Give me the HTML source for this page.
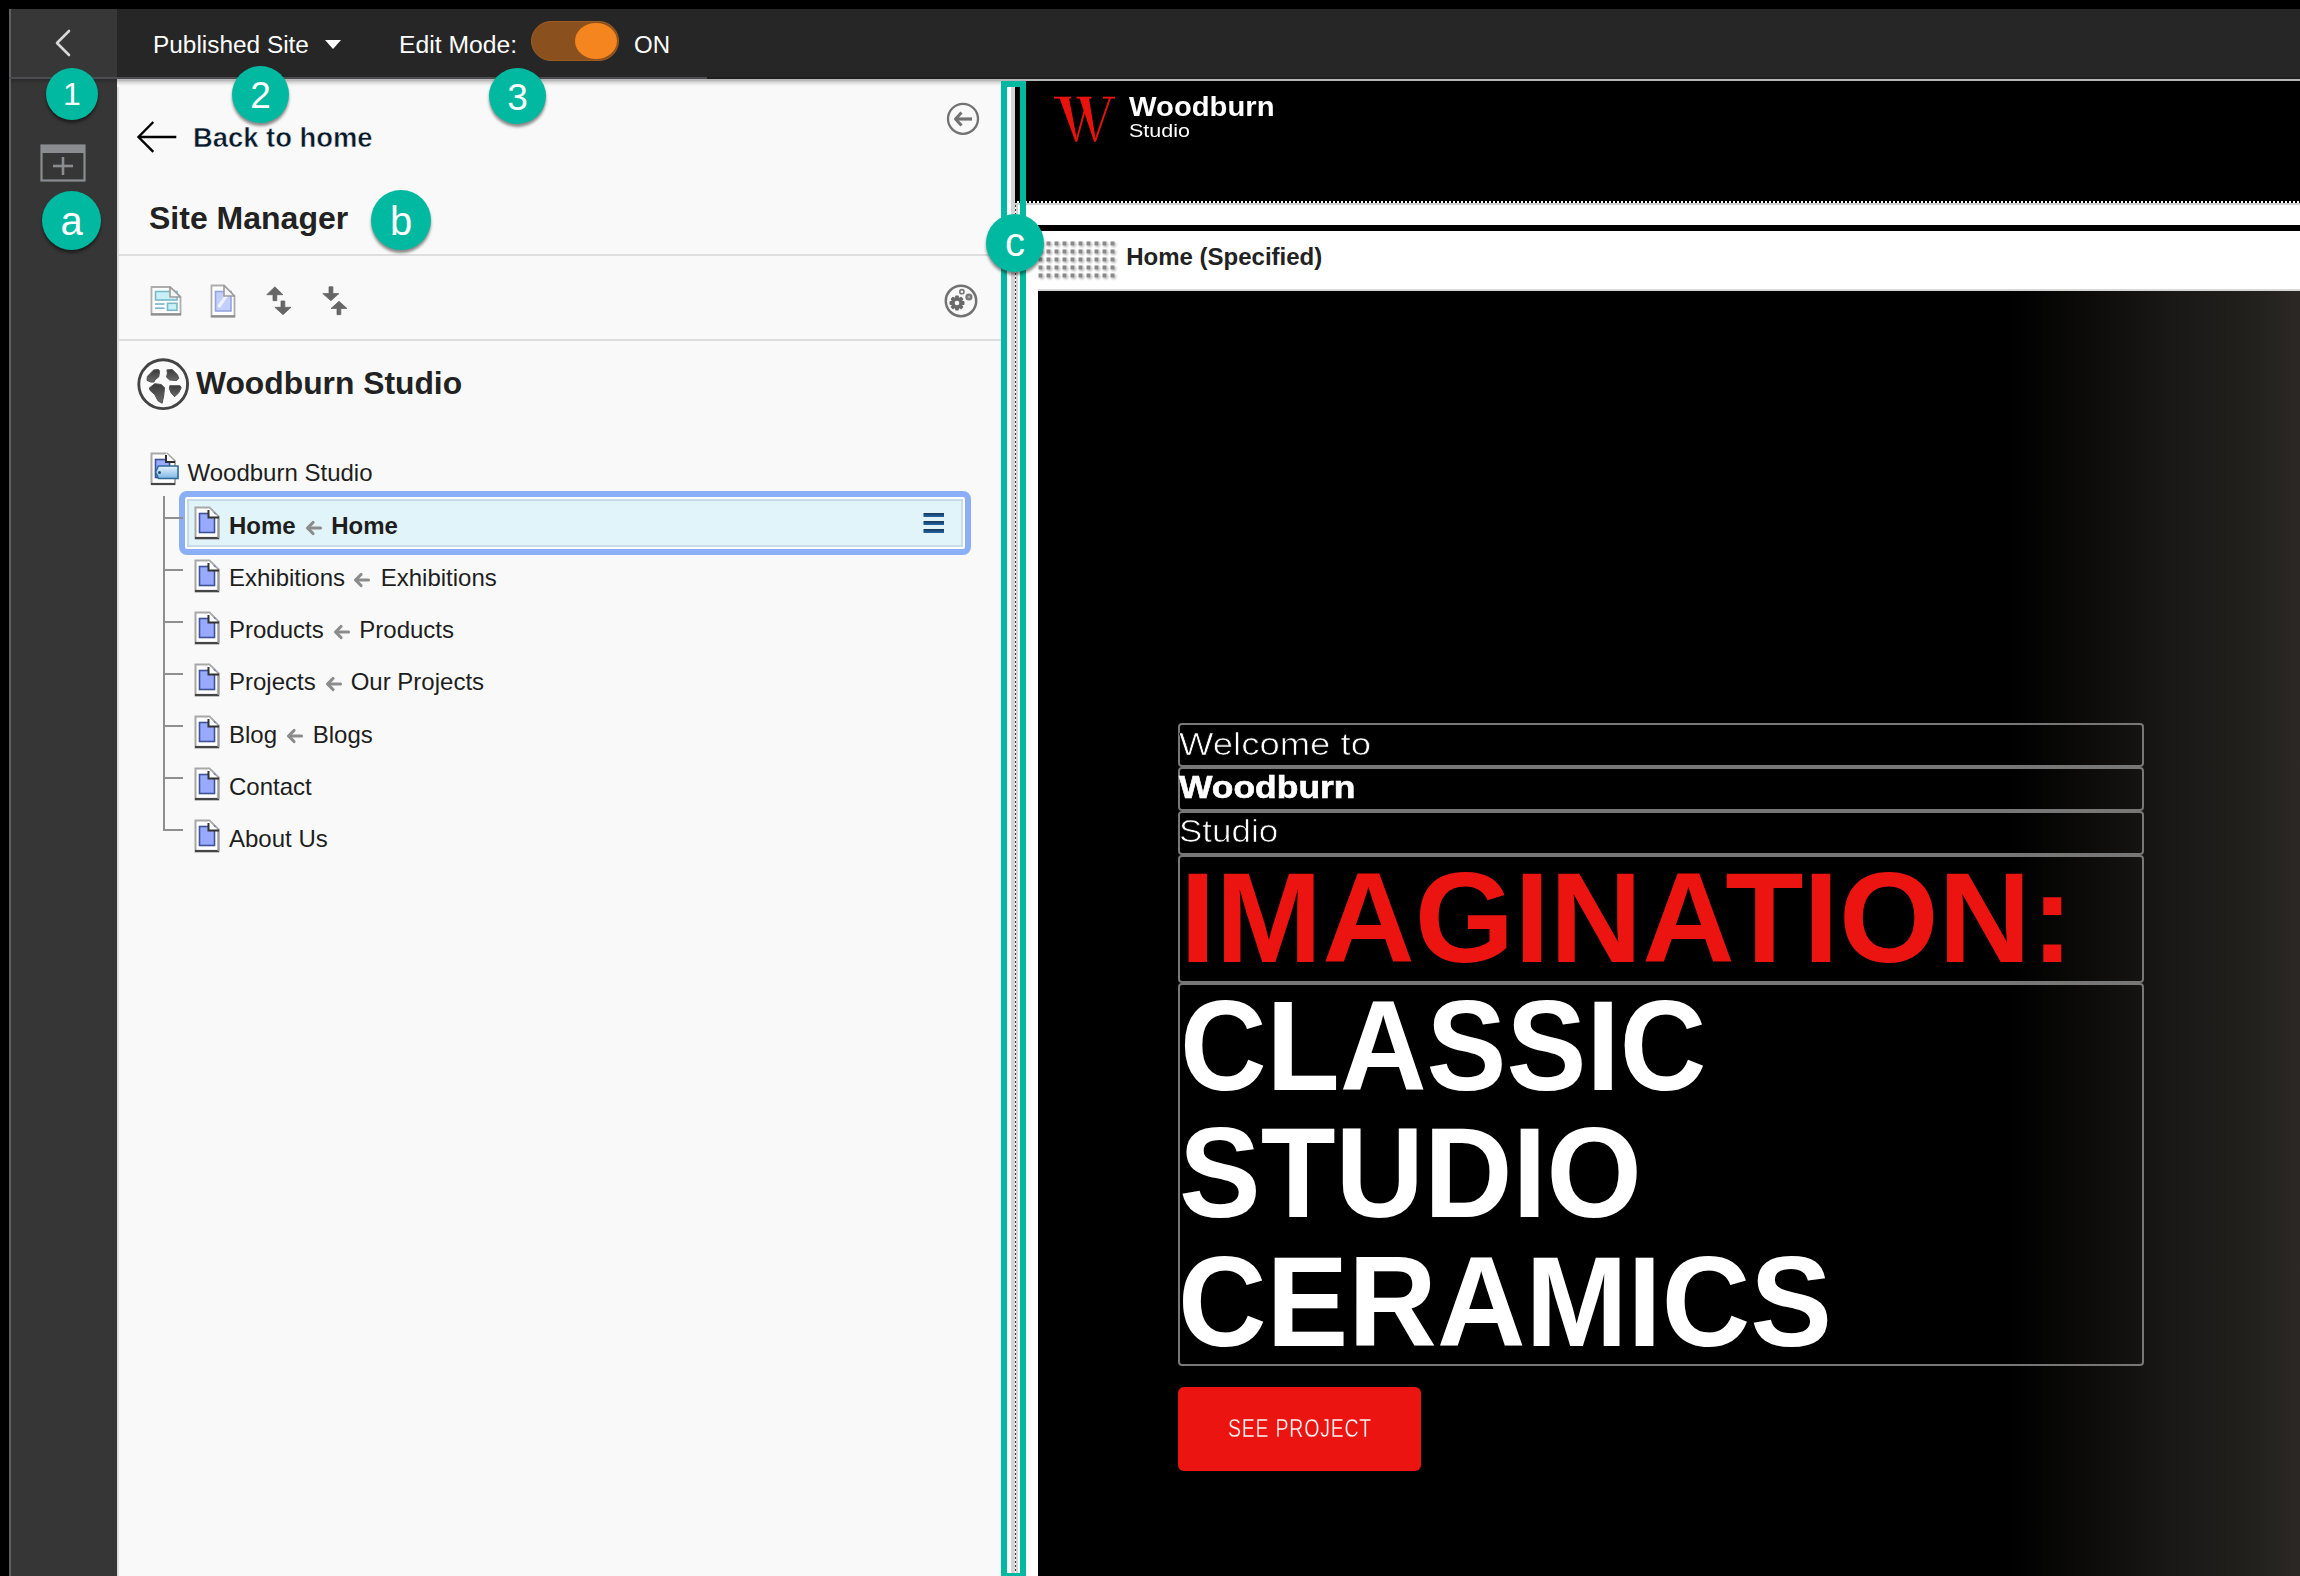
<!DOCTYPE html>
<html><head><meta charset="utf-8">
<style>
*{margin:0;padding:0;box-sizing:border-box}
html,body{width:2300px;height:1576px;overflow:hidden;background:#000;font-family:"Liberation Sans",sans-serif}
.a{position:absolute}
.t{position:absolute;white-space:nowrap;line-height:1}
.badge{position:absolute;z-index:5;border-radius:50%;background:#00b9a0;box-shadow:0 3px 3px rgba(0,0,0,.45);color:#fff;text-align:center;font-family:"Liberation Sans",sans-serif}
.badge span{position:absolute;left:0;right:0;line-height:1}
</style></head><body>

<!-- left sidebar -->
<div class="a" style="left:9px;top:9px;width:108px;height:1567px;background:#363636"></div>
<div class="a" style="left:9px;top:9px;width:2px;height:1567px;background:#5e5e5e"></div>
<div class="a" style="left:11px;top:9px;width:106px;height:68px;background:#373737"></div>
<div class="a" style="left:11px;top:79px;width:106px;height:5px;background:linear-gradient(#2a2a2a,#363636)"></div>
<div class="a" style="left:9px;top:77px;width:108px;height:2px;background:#4b4d53"></div>
<svg class="a" style="left:50px;top:28px" width="26" height="30"><polyline points="19,3 7,15 19,27" fill="none" stroke="#d8d8d8" stroke-width="2.6" stroke-linecap="round" stroke-linejoin="round"/></svg>
<!-- add section icon -->
<svg class="a" style="left:40px;top:144px" width="46" height="38">
<rect x="1.5" y="1.5" width="43" height="35" fill="none" stroke="#8b8c90" stroke-width="2.2"/>
<rect x="1" y="1" width="44" height="8" fill="#8b8c90"/>
<line x1="13" y1="22" x2="33" y2="22" stroke="#8b8c90" stroke-width="2.6"/>
<line x1="23" y1="13" x2="23" y2="31" stroke="#8b8c90" stroke-width="2.6"/>
</svg>

<!-- top bar -->
<div class="a" style="left:117px;top:9px;width:2183px;height:70px;background:#262626"></div>
<div class="a" style="left:117px;top:77px;width:590px;height:2px;background:#4b4d53"></div>
<div class="a" style="left:707px;top:77px;width:1593px;height:2px;background:#1f1f1f"></div>
<div class="t" style="left:153px;top:33.2px;font-size:24.4px;color:#fff">Published Site</div>
<svg class="a" style="left:324px;top:39px" width="18" height="11"><polygon points="1,1 17,1 9,10" fill="#fff"/></svg>
<div class="t" style="left:399px;top:33.2px;font-size:24.7px;color:#fff">Edit Mode:</div>
<div class="a" style="left:531px;top:21px;width:88px;height:40px;border-radius:20px;background:#8a511f;border:1.5px solid #9d5b20"></div>
<div class="a" style="left:575px;top:23px;width:42px;height:36px;border-radius:50%;background:#f5851e"></div>
<div class="t" style="left:634px;top:33.2px;font-size:24px;color:#fff">ON</div>

<!-- panel -->
<div class="a" style="left:117px;top:79px;width:884px;height:1497px;background:#f9f9f9"></div>
<div class="a" style="left:117px;top:79px;width:2px;height:1497px;background:#dcdcdc"></div>
<div class="a" style="left:117px;top:79px;width:884px;height:8px;background:linear-gradient(#b8b8b8 0,#b8b8b8 1.5px,#d4d4d4 3px,#f3f3f3 6px,#f9f9f9 8px)"></div>
<div class="a" style="left:1001px;top:79px;width:1299px;height:2px;background:#b6b6b6"></div>

<!-- back to home -->
<svg class="a" style="left:136px;top:120px" width="44" height="36"><polyline points="17.3,2 2.5,17 17.3,31.8" fill="none" stroke="#000" stroke-width="2.4"/><line x1="3" y1="17" x2="40.3" y2="17" stroke="#000" stroke-width="2.4"/></svg>
<div class="t" style="left:193px;top:124px;font-size:27.4px;font-weight:bold;color:#071a2b;-webkit-text-stroke:0.5px #f9f9f9">Back to home</div>
<!-- collapse icon -->
<svg class="a" style="left:945px;top:101px" width="36" height="36"><circle cx="18" cy="17.8" r="15" fill="none" stroke="#727272" stroke-width="2.3"/><polyline points="16.5,11.5 10.5,18 16.5,24.5" fill="none" stroke="#727272" stroke-width="3" stroke-linejoin="round"/><line x1="11" y1="18" x2="27" y2="18" stroke="#727272" stroke-width="3.2"/></svg>

<div class="t" style="left:149px;top:202px;font-size:32px;font-weight:bold;color:#222">Site Manager</div>
<div class="a" style="left:119px;top:254px;width:882px;height:2px;background:#dedede"></div>

<!-- toolbar -->
<svg class="a" style="left:150px;top:285px" width="32" height="31">
<path d="M1.5,2 H20 L30.5,12 V29.5 H1.5 Z" fill="#fff" stroke="#adadad" stroke-width="1.8"/>
<line x1="1" y1="29.3" x2="31" y2="29.3" stroke="#8e8e8e" stroke-width="2.2"/>
<rect x="5.5" y="6.5" width="21.5" height="8.5" fill="#c9f0f7" stroke="#7ab8c8" stroke-width="1.6"/>
<line x1="5" y1="19" x2="14.5" y2="19" stroke="#7ab8c8" stroke-width="1.7"/>
<line x1="5" y1="23.2" x2="14.5" y2="23.2" stroke="#7ab8c8" stroke-width="1.7"/>
<rect x="17.5" y="18.3" width="9.5" height="7" fill="#c9f0f7" stroke="#7ab8c8" stroke-width="1.6"/>
<path d="M20,2 V12 H30.5 Z" fill="#f6f6f6" stroke="#9d9d9d" stroke-width="1.6" stroke-linejoin="round"/>
</svg>
<svg class="a" style="left:210px;top:284px" width="26" height="34">
<path d="M1.5,1.5 H14 L24.5,12 V32.5 H1.5 Z" fill="#fff" stroke="#adadad" stroke-width="1.8"/>
<line x1="1" y1="32.3" x2="25" y2="32.3" stroke="#8e8e8e" stroke-width="2.2"/>
<rect x="5.5" y="7.5" width="15.5" height="19.5" fill="#c3cffb" stroke="#93a5dc" stroke-width="1.6"/>
<line x1="8.5" y1="23" x2="17" y2="11" stroke="#eef1ff" stroke-width="3.2"/>
<path d="M14,1.5 V12 H24.5 Z" fill="#f6f6f6" stroke="#9d9d9d" stroke-width="1.6" stroke-linejoin="round"/>
</svg>
<svg class="a" style="left:265px;top:285px" width="30" height="32" fill="#666" stroke="#666" stroke-width="0.8" stroke-linejoin="round">
<polygon points="9.9,1.8 17.9,9.7 11.8,9.7 11.8,15.7 8,15.7 8,9.7 1.8,9.7"/>
<polygon points="16,16 19.8,16 19.8,22.3 26,22.3 18,29.7 9.9,22.3 16,22.3"/>
</svg>
<svg class="a" style="left:321px;top:285px" width="30" height="32" fill="#666" stroke="#666" stroke-width="0.8" stroke-linejoin="round">
<polygon points="8,1.8 11.9,1.8 11.9,8.6 17.9,8.6 9.9,15.7 1.8,8.6 8,8.6"/>
<polygon points="18,16.3 26,23.5 19.8,23.5 19.8,29.7 16,29.7 16,23.5 10,23.5"/>
</svg>
<!-- settings icon -->
<svg class="a" style="left:943px;top:283px" width="36" height="36">
<circle cx="18" cy="18" r="15.2" fill="none" stroke="#727272" stroke-width="2.5"/>
<g fill="#6a6a6a"><rect x="12.1" y="12.5" width="3.8" height="3.5" rx="0.9" transform="rotate(0 14 20)"/><rect x="12.1" y="12.5" width="3.8" height="3.5" rx="0.9" transform="rotate(45 14 20)"/><rect x="12.1" y="12.5" width="3.8" height="3.5" rx="0.9" transform="rotate(90 14 20)"/><rect x="12.1" y="12.5" width="3.8" height="3.5" rx="0.9" transform="rotate(135 14 20)"/><rect x="12.1" y="12.5" width="3.8" height="3.5" rx="0.9" transform="rotate(180 14 20)"/><rect x="12.1" y="12.5" width="3.8" height="3.5" rx="0.9" transform="rotate(225 14 20)"/><rect x="12.1" y="12.5" width="3.8" height="3.5" rx="0.9" transform="rotate(270 14 20)"/><rect x="12.1" y="12.5" width="3.8" height="3.5" rx="0.9" transform="rotate(315 14 20)"/><circle cx="14" cy="20" r="5.9"/></g>
<circle cx="14" cy="20" r="2.3" fill="#f9f9f9"/>
<circle cx="18.9" cy="8.7" r="2.1" fill="none" stroke="#777" stroke-width="1.6"/>
<circle cx="25.9" cy="14" r="3.6" fill="#7a7a7a"/>
<circle cx="25.9" cy="14" r="1.3" fill="#aaa"/>
</svg>
<div class="a" style="left:119px;top:339px;width:882px;height:2px;background:#dedede"></div>

<!-- globe -->
<svg class="a" style="left:135px;top:356px" width="58" height="58">
<defs><linearGradient id="gg" x1="0" y1="0" x2="0" y2="1"><stop offset="0" stop-color="#3a3a3a"/><stop offset="1" stop-color="#6a6a6a"/></linearGradient></defs>
<circle cx="28.2" cy="28.2" r="24.4" fill="#fafafa" stroke="#444" stroke-width="2.9"/>
<g fill="url(#gg)" stroke="#505050" stroke-width="1" stroke-linejoin="round">
<polygon points="12.4,20.4 18.7,13.9 23.4,13.5 24.6,15.1 23.8,20.8 19.8,24 19,26 15.7,26 12,24.4"/><polygon points="31.9,13.9 37.2,13.5 42.5,18.8 43.7,22.4 41.7,24.5 34.8,24 31.6,21.2 32.4,17.1"/><polygon points="14.5,31.8 19.8,27.7 26.3,28.5 29.5,31.8 28.7,39.9 27.1,47.2 23,44.8 19.8,38.7 14.9,34.2"/><polygon points="34.8,29.7 45,29.7 46.2,31.8 43.7,36.7 39.7,40.7 36,36.7 34.4,32.6"/>
</g>
</svg>
<div class="t" style="left:196px;top:368px;font-size:31.8px;font-weight:bold;color:#222">Woodburn Studio</div>

<!-- tree -->
<!-- root icon -->
<svg class="a" style="left:149px;top:451px" width="32" height="36">
<path d="M2.5,2.5 H18 L26,10 V33 H2.5 Z" fill="#fff" stroke="#a8a8a8" stroke-width="2"/>
<line x1="2" y1="33" x2="26" y2="33" stroke="#454545" stroke-width="2.2"/>
<rect x="6.5" y="8.5" width="14" height="18" fill="#97aaff" stroke="#3d5394" stroke-width="1.6"/>
<path d="M17,2 V11 H26 Z" fill="#fff"/><path d="M17,4 V11 H26" fill="none" stroke="#2e2e2e" stroke-width="2"/>
<defs><linearGradient id="tg" x1="0" y1="0" x2="0" y2="1"><stop offset="0" stop-color="#e6f3fc"/><stop offset="1" stop-color="#7fb6e8"/></linearGradient></defs>
<path d="M9.5,15 H29 V27.5 H9.5 L6.5,21 Z" fill="url(#tg)" stroke="#2f6a99" stroke-width="1.6"/>
<circle cx="10.5" cy="21.5" r="1.5" fill="#2d5070"/>
</svg>
<div class="t" style="left:187.5px;top:460.6px;font-size:24px;color:#1e1e1e">Woodburn Studio</div>
<div class="a" style="left:163px;top:496px;width:2px;height:335px;background:#8f8f8f"></div>
<!-- selected row -->
<div class="a" style="left:179px;top:491px;width:792px;height:64px;border:6px solid #8aaff7;border-radius:8px;background:#fff"></div>
<div class="a" style="left:187px;top:499px;width:776px;height:48px;border:2px solid #c6dde8;background:#e1f4fa"></div>
<svg class="a" style="left:922px;top:511px" width="24" height="24"><defs><linearGradient id="hb" x1="0" y1="0" x2="0" y2="1"><stop offset="0" stop-color="#16385c"/><stop offset="1" stop-color="#2566a3"/></linearGradient></defs><g fill="url(#hb)"><rect x="1.5" y="2" width="20.5" height="4"/><rect x="1.5" y="10" width="20.5" height="4"/><rect x="1.5" y="18" width="20.5" height="4"/></g></svg>
<div class="a" style="left:163px;top:517px;width:20px;height:2px;background:#8f8f8f"></div>
<svg class="a" style="left:194px;top:506px" width="26" height="34"><path d="M1.5,1.5 H15.5 L24.5,10.5 V32.5 H1.5 Z" fill="#fff" stroke="#a8a8a8" stroke-width="2"/><line x1="1" y1="32" x2="25" y2="32" stroke="#454545" stroke-width="2.2"/><line x1="24.5" y1="10" x2="24.5" y2="32" stroke="#9a9a9a" stroke-width="2"/><rect x="5.5" y="7.5" width="15" height="19" fill="#97aaff" stroke="#3d5394" stroke-width="1.6"/><path d="M14.5,2 V11.5 H24.5 Z" fill="#fff"/><path d="M14.5,4 V11.5 H25" fill="none" stroke="#333" stroke-width="2"/></svg>
<div class="t" style="left:229px;top:514.2px;font-size:24px;font-weight:bold;color:#1e1e1e">Home</div>
<svg class="a" style="left:304.5px;top:520.0px" width="20" height="16"><g fill="none" stroke="#8c8c8c" stroke-width="3.2" stroke-linecap="round" stroke-linejoin="round"><polyline points="8,2.5 2.6,8 8,13.5"/><line x1="3" y1="8" x2="15.5" y2="8"/></g></svg>
<div class="t" style="left:331.2px;top:514.2px;font-size:24px;font-weight:bold;color:#1e1e1e">Home</div>
<div class="a" style="left:163px;top:569px;width:20px;height:2px;background:#8f8f8f"></div>
<svg class="a" style="left:194px;top:559px" width="26" height="34"><path d="M1.5,1.5 H15.5 L24.5,10.5 V32.5 H1.5 Z" fill="#fff" stroke="#a8a8a8" stroke-width="2"/><line x1="1" y1="32" x2="25" y2="32" stroke="#454545" stroke-width="2.2"/><line x1="24.5" y1="10" x2="24.5" y2="32" stroke="#9a9a9a" stroke-width="2"/><rect x="5.5" y="7.5" width="15" height="19" fill="#97aaff" stroke="#3d5394" stroke-width="1.6"/><path d="M14.5,2 V11.5 H24.5 Z" fill="#fff"/><path d="M14.5,4 V11.5 H25" fill="none" stroke="#333" stroke-width="2"/></svg>
<div class="t" style="left:229px;top:566.3px;font-size:24px;font-weight:normal;color:#1e1e1e">Exhibitions</div>
<svg class="a" style="left:353.4px;top:572.1px" width="20" height="16"><g fill="none" stroke="#8c8c8c" stroke-width="3.2" stroke-linecap="round" stroke-linejoin="round"><polyline points="8,2.5 2.6,8 8,13.5"/><line x1="3" y1="8" x2="15.5" y2="8"/></g></svg>
<div class="t" style="left:380.7px;top:566.3px;font-size:24px;font-weight:normal;color:#1e1e1e">Exhibitions</div>
<div class="a" style="left:163px;top:621px;width:20px;height:2px;background:#8f8f8f"></div>
<svg class="a" style="left:194px;top:611px" width="26" height="34"><path d="M1.5,1.5 H15.5 L24.5,10.5 V32.5 H1.5 Z" fill="#fff" stroke="#a8a8a8" stroke-width="2"/><line x1="1" y1="32" x2="25" y2="32" stroke="#454545" stroke-width="2.2"/><line x1="24.5" y1="10" x2="24.5" y2="32" stroke="#9a9a9a" stroke-width="2"/><rect x="5.5" y="7.5" width="15" height="19" fill="#97aaff" stroke="#3d5394" stroke-width="1.6"/><path d="M14.5,2 V11.5 H24.5 Z" fill="#fff"/><path d="M14.5,4 V11.5 H25" fill="none" stroke="#333" stroke-width="2"/></svg>
<div class="t" style="left:229px;top:618.3px;font-size:24px;font-weight:normal;color:#1e1e1e">Products</div>
<svg class="a" style="left:332.5px;top:624.2px" width="20" height="16"><g fill="none" stroke="#8c8c8c" stroke-width="3.2" stroke-linecap="round" stroke-linejoin="round"><polyline points="8,2.5 2.6,8 8,13.5"/><line x1="3" y1="8" x2="15.5" y2="8"/></g></svg>
<div class="t" style="left:359.3px;top:618.3px;font-size:24px;font-weight:normal;color:#1e1e1e">Products</div>
<div class="a" style="left:163px;top:673px;width:20px;height:2px;background:#8f8f8f"></div>
<svg class="a" style="left:194px;top:663px" width="26" height="34"><path d="M1.5,1.5 H15.5 L24.5,10.5 V32.5 H1.5 Z" fill="#fff" stroke="#a8a8a8" stroke-width="2"/><line x1="1" y1="32" x2="25" y2="32" stroke="#454545" stroke-width="2.2"/><line x1="24.5" y1="10" x2="24.5" y2="32" stroke="#9a9a9a" stroke-width="2"/><rect x="5.5" y="7.5" width="15" height="19" fill="#97aaff" stroke="#3d5394" stroke-width="1.6"/><path d="M14.5,2 V11.5 H24.5 Z" fill="#fff"/><path d="M14.5,4 V11.5 H25" fill="none" stroke="#333" stroke-width="2"/></svg>
<div class="t" style="left:229px;top:670.4px;font-size:24px;font-weight:normal;color:#1e1e1e">Projects</div>
<svg class="a" style="left:324.5px;top:676.2px" width="20" height="16"><g fill="none" stroke="#8c8c8c" stroke-width="3.2" stroke-linecap="round" stroke-linejoin="round"><polyline points="8,2.5 2.6,8 8,13.5"/><line x1="3" y1="8" x2="15.5" y2="8"/></g></svg>
<div class="t" style="left:350.7px;top:670.4px;font-size:24px;font-weight:normal;color:#1e1e1e">Our Projects</div>
<div class="a" style="left:163px;top:725px;width:20px;height:2px;background:#8f8f8f"></div>
<svg class="a" style="left:194px;top:715px" width="26" height="34"><path d="M1.5,1.5 H15.5 L24.5,10.5 V32.5 H1.5 Z" fill="#fff" stroke="#a8a8a8" stroke-width="2"/><line x1="1" y1="32" x2="25" y2="32" stroke="#454545" stroke-width="2.2"/><line x1="24.5" y1="10" x2="24.5" y2="32" stroke="#9a9a9a" stroke-width="2"/><rect x="5.5" y="7.5" width="15" height="19" fill="#97aaff" stroke="#3d5394" stroke-width="1.6"/><path d="M14.5,2 V11.5 H24.5 Z" fill="#fff"/><path d="M14.5,4 V11.5 H25" fill="none" stroke="#333" stroke-width="2"/></svg>
<div class="t" style="left:229px;top:722.5px;font-size:24px;font-weight:normal;color:#1e1e1e">Blog</div>
<svg class="a" style="left:285.5px;top:728.3px" width="20" height="16"><g fill="none" stroke="#8c8c8c" stroke-width="3.2" stroke-linecap="round" stroke-linejoin="round"><polyline points="8,2.5 2.6,8 8,13.5"/><line x1="3" y1="8" x2="15.5" y2="8"/></g></svg>
<div class="t" style="left:312.7px;top:722.5px;font-size:24px;font-weight:normal;color:#1e1e1e">Blogs</div>
<div class="a" style="left:163px;top:777px;width:20px;height:2px;background:#8f8f8f"></div>
<svg class="a" style="left:194px;top:767px" width="26" height="34"><path d="M1.5,1.5 H15.5 L24.5,10.5 V32.5 H1.5 Z" fill="#fff" stroke="#a8a8a8" stroke-width="2"/><line x1="1" y1="32" x2="25" y2="32" stroke="#454545" stroke-width="2.2"/><line x1="24.5" y1="10" x2="24.5" y2="32" stroke="#9a9a9a" stroke-width="2"/><rect x="5.5" y="7.5" width="15" height="19" fill="#97aaff" stroke="#3d5394" stroke-width="1.6"/><path d="M14.5,2 V11.5 H24.5 Z" fill="#fff"/><path d="M14.5,4 V11.5 H25" fill="none" stroke="#333" stroke-width="2"/></svg>
<div class="t" style="left:229px;top:774.6px;font-size:24px;font-weight:normal;color:#1e1e1e">Contact</div>
<div class="a" style="left:163px;top:829px;width:20px;height:2px;background:#8f8f8f"></div>
<svg class="a" style="left:194px;top:819px" width="26" height="34"><path d="M1.5,1.5 H15.5 L24.5,10.5 V32.5 H1.5 Z" fill="#fff" stroke="#a8a8a8" stroke-width="2"/><line x1="1" y1="32" x2="25" y2="32" stroke="#454545" stroke-width="2.2"/><line x1="24.5" y1="10" x2="24.5" y2="32" stroke="#9a9a9a" stroke-width="2"/><rect x="5.5" y="7.5" width="15" height="19" fill="#97aaff" stroke="#3d5394" stroke-width="1.6"/><path d="M14.5,2 V11.5 H24.5 Z" fill="#fff"/><path d="M14.5,4 V11.5 H25" fill="none" stroke="#333" stroke-width="2"/></svg>
<div class="t" style="left:229px;top:826.7px;font-size:24px;font-weight:normal;color:#1e1e1e">About Us</div>

<!-- splitter -->
<div class="a" style="left:1001px;top:81px;width:6px;height:1495px;background:#00b9a0;z-index:2"></div>
<div class="a" style="left:1007px;top:87px;width:4px;height:1486px;background:#fdfdfd"></div>
<div class="a" style="left:1011px;top:87px;width:9px;height:1486px;background:#d4d4d4"></div>
<div class="a" style="left:1018px;top:205px;width:2px;height:1368px;background:#fdfdfd"></div>
<div class="a" style="left:1015px;top:201px;width:1px;height:1372px;background:repeating-linear-gradient(#3a3a3a 0 2px,#fff 2px 4px)"></div>
<div class="a" style="left:1015px;top:87px;width:5px;height:114px;background:#000"></div>
<div class="a" style="left:1020px;top:81px;width:6px;height:1495px;background:#00b9a0;z-index:2"></div>
<div class="a" style="left:1001px;top:81px;width:25px;height:6px;background:#00b9a0;z-index:2"></div>
<div class="a" style="left:1001px;top:1573px;width:25px;height:3px;background:#00b9a0;z-index:2"></div>

<!-- website -->
<div class="a" style="left:1026px;top:81px;width:1274px;height:120px;background:#000"></div>
<div class="a" style="left:1015px;top:201px;width:1285px;height:2px;background:repeating-linear-gradient(90deg,#000 0 2px,#fff 2px 4px)"></div>
<div class="a" style="left:1015px;top:203px;width:1285px;height:2px;background:#d0d0d0"></div>
<div class="a" style="left:1026px;top:205px;width:1274px;height:1371px;background:#fff"></div>
<div class="a" style="left:1038px;top:225px;width:1262px;height:6px;background:#000"></div>
<div class="a" style="left:1038px;top:289px;width:1262px;height:2px;background:#d8d8d8"></div>
<div class="a" style="left:1038px;top:291px;width:1262px;height:1285px;background:linear-gradient(90deg,#000 0,#000 972px,#0e0d0c 1062px,#1a1816 1132px,#22201d 1212px,#2b2826 1262px)"></div>

<svg class="a" style="left:1050px;top:90px" width="70" height="56"><g fill="#e8130d"><polygon points="9.5,8.0 19.0,8.0 27.3,51.5 25.3,51.5"/><polygon points="25.3,51.5 27.2,51.5 39.0,8.0 37.0,8.0"/><polygon points="29.5,8.0 39.0,8.0 46.0,51.5 44.0,51.5"/><polygon points="44.0,51.5 46.0,51.5 61.0,8.0 59.0,8.0"/><polygon points="4.0,6.7 21.0,6.7 21.0,8.6 4.0,8.6"/><polygon points="26.5,6.7 41.5,6.7 41.5,8.6 26.5,8.6"/><polygon points="53.0,6.7 65.0,6.7 65.0,8.6 53.0,8.6"/></g></svg>
<div class="t" style="left:1128.5px;top:93.6px;font-size:27px;font-weight:bold;color:#fff;transform:scaleX(1.082);transform-origin:0 0">Woodburn</div>
<div class="t" style="left:1128.5px;top:121.3px;font-size:19px;color:#fff;transform:scaleX(1.13);transform-origin:0 0">Studio</div>

<svg class="a" style="left:1037px;top:240px" width="82" height="42"><defs><filter id="bl" x="-50%" y="-50%" width="200%" height="200%"><feGaussianBlur stdDeviation="0.5"/><feDropShadow dx="1.2" dy="1.2" stdDeviation="0.9" flood-color="#000" flood-opacity="0.35"/></filter></defs><g fill="#8a8a8a" filter="url(#bl)"><rect x="1.5" y="1.5" width="4" height="4"/><rect x="9.5" y="1.5" width="4" height="4"/><rect x="17.5" y="1.5" width="4" height="4"/><rect x="25.5" y="1.5" width="4" height="4"/><rect x="33.5" y="1.5" width="4" height="4"/><rect x="41.5" y="1.5" width="4" height="4"/><rect x="49.5" y="1.5" width="4" height="4"/><rect x="57.5" y="1.5" width="4" height="4"/><rect x="65.5" y="1.5" width="4" height="4"/><rect x="73.5" y="1.5" width="4" height="4"/><rect x="1.5" y="9.5" width="4" height="4"/><rect x="9.5" y="9.5" width="4" height="4"/><rect x="17.5" y="9.5" width="4" height="4"/><rect x="25.5" y="9.5" width="4" height="4"/><rect x="33.5" y="9.5" width="4" height="4"/><rect x="41.5" y="9.5" width="4" height="4"/><rect x="49.5" y="9.5" width="4" height="4"/><rect x="57.5" y="9.5" width="4" height="4"/><rect x="65.5" y="9.5" width="4" height="4"/><rect x="73.5" y="9.5" width="4" height="4"/><rect x="1.5" y="17.5" width="4" height="4"/><rect x="9.5" y="17.5" width="4" height="4"/><rect x="17.5" y="17.5" width="4" height="4"/><rect x="25.5" y="17.5" width="4" height="4"/><rect x="33.5" y="17.5" width="4" height="4"/><rect x="41.5" y="17.5" width="4" height="4"/><rect x="49.5" y="17.5" width="4" height="4"/><rect x="57.5" y="17.5" width="4" height="4"/><rect x="65.5" y="17.5" width="4" height="4"/><rect x="73.5" y="17.5" width="4" height="4"/><rect x="1.5" y="25.5" width="4" height="4"/><rect x="9.5" y="25.5" width="4" height="4"/><rect x="17.5" y="25.5" width="4" height="4"/><rect x="25.5" y="25.5" width="4" height="4"/><rect x="33.5" y="25.5" width="4" height="4"/><rect x="41.5" y="25.5" width="4" height="4"/><rect x="49.5" y="25.5" width="4" height="4"/><rect x="57.5" y="25.5" width="4" height="4"/><rect x="65.5" y="25.5" width="4" height="4"/><rect x="73.5" y="25.5" width="4" height="4"/><rect x="1.5" y="33.5" width="4" height="4"/><rect x="9.5" y="33.5" width="4" height="4"/><rect x="17.5" y="33.5" width="4" height="4"/><rect x="25.5" y="33.5" width="4" height="4"/><rect x="33.5" y="33.5" width="4" height="4"/><rect x="41.5" y="33.5" width="4" height="4"/><rect x="49.5" y="33.5" width="4" height="4"/><rect x="57.5" y="33.5" width="4" height="4"/><rect x="65.5" y="33.5" width="4" height="4"/><rect x="73.5" y="33.5" width="4" height="4"/></g></svg>
<div class="t" style="left:1126.2px;top:244.6px;font-size:24px;font-weight:bold;color:#222">Home (Specified)</div>

<!-- hero boxes -->
<div class="a" style="left:1178px;top:723px;width:966px;height:44px;border:2px solid #777;border-radius:4px"></div>
<div class="a" style="left:1178px;top:767px;width:966px;height:44px;border:2px solid #777;border-radius:4px"></div>
<div class="a" style="left:1178px;top:811px;width:966px;height:44px;border:2px solid #777;border-radius:4px"></div>
<div class="a" style="left:1178px;top:855px;width:966px;height:128px;border:2px solid #777;border-radius:4px"></div>
<div class="a" style="left:1178px;top:983px;width:966px;height:383px;border:2px solid #777;border-radius:4px"></div>

<div class="t" style="left:1179px;top:729px;font-size:31px;color:#fff;-webkit-text-stroke:0.7px #000;transform:scaleX(1.177);transform-origin:0 0">Welcome to</div>
<div class="t" style="left:1179px;top:772.4px;font-size:31px;font-weight:bold;color:#fff;-webkit-text-stroke:0.6px #fff;transform:scaleX(1.143);transform-origin:0 0">Woodburn</div>
<div class="t" style="left:1179px;top:815.8px;font-size:31px;color:#fff;-webkit-text-stroke:0.7px #000;transform:scaleX(1.128);transform-origin:0 0">Studio</div>
<div class="t" style="left:1180px;top:854.3px;font-size:128px;font-weight:bold;color:#ec1410">IMAGINATION:</div>
<div class="t" style="left:1180px;top:981.5px;font-size:128px;font-weight:bold;color:#fff;transform:scaleX(0.937);transform-origin:0 0">CLASSIC</div>
<div class="t" style="left:1178.5px;top:1109.4px;font-size:128px;font-weight:bold;color:#fff;transform:scaleX(0.957);transform-origin:0 0">STUDIO</div>
<div class="t" style="left:1178px;top:1237.9px;font-size:128px;font-weight:bold;color:#fff;transform:scaleX(0.958);transform-origin:0 0">CERAMICS</div>
<div class="a" style="left:1178px;top:1387px;width:243px;height:84px;border-radius:6px;background:#ec1410"></div>
<div class="t" style="left:1228px;top:1416.2px;font-size:25px;color:#fff;letter-spacing:1px;-webkit-text-stroke:0.4px #ec1410;transform:scaleX(0.78);transform-origin:0 0">SEE PROJECT</div>

<!-- badges -->
<div class="badge" style="left:46px;top:68px;width:52px;height:52px"><span style="top:10px;font-size:32px">1</span></div>
<div class="badge" style="left:232px;top:66px;width:57px;height:57px"><span style="top:11px;font-size:37px">2</span></div>
<div class="badge" style="left:489px;top:68px;width:57px;height:56px"><span style="top:11px;font-size:37px">3</span></div>
<div class="badge" style="left:42px;top:191px;width:59px;height:59px"><span style="top:10px;font-size:40px">a</span></div>
<div class="badge" style="left:371px;top:190px;width:60px;height:60px"><span style="top:10.5px;font-size:40px">b</span></div>
<div class="badge" style="left:986px;top:214px;width:58px;height:58px"><span style="top:8px;font-size:40px">c</span></div>

</body></html>
